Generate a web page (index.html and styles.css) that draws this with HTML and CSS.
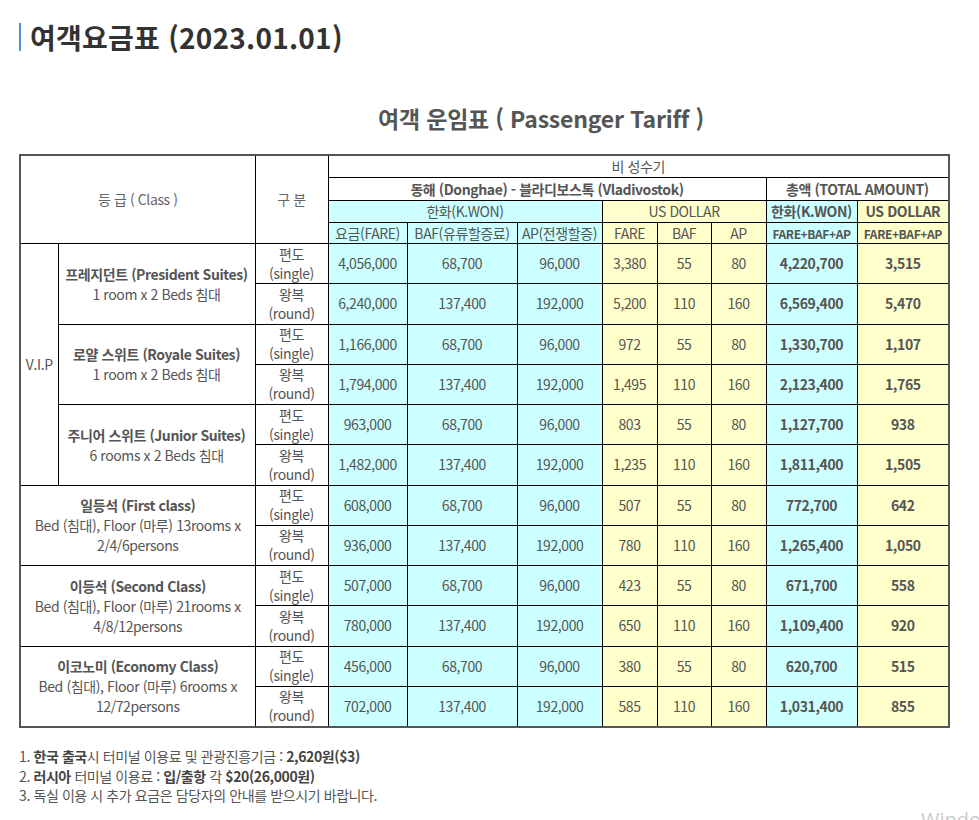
FILE: index.html
```html
<!DOCTYPE html>
<html lang="ko">
<head>
<meta charset="utf-8">
<title>여객요금표</title>
<link rel="stylesheet" href="styles.css">
</head>
<body>
<h2 class="page-title">여객요금표 (2023.01.01)</h2>
<section class="tariff">
  <h3 class="tariff-title">여객 운임표 ( Passenger Tariff )</h3>
  <table class="fare-table">
    <colgroup>
      <col style="width:38px"><col style="width:197px"><col style="width:73px">
      <col style="width:79px"><col style="width:110px"><col style="width:85px">
      <col style="width:55px"><col style="width:54px"><col style="width:55px">
      <col style="width:91px"><col style="width:92px">
    </colgroup>
    <thead>
      <tr class="h1">
        <th rowspan="4" colspan="2" class="light">등 급 ( Class )</th>
        <th rowspan="4" class="light">구 분</th>
        <th colspan="8">비 성수기</th>
      </tr>
      <tr class="h2">
        <th colspan="6" class="b">동해 (Donghae) - 블라디보스톡 (Vladivostok)</th>
        <th colspan="2" class="b">총액 (TOTAL AMOUNT)</th>
      </tr>
      <tr class="h3">
        <th colspan="3" class="krw">한화(K.WON)</th>
        <th colspan="3" class="usd">US DOLLAR</th>
        <th class="krw b">한화(K.WON)</th>
        <th class="usd b">US DOLLAR</th>
      </tr>
      <tr class="h4">
        <th class="krw">요금(FARE)</th>
        <th class="krw">BAF(유류할증료)</th>
        <th class="krw">AP(전쟁할증)</th>
        <th class="usd">FARE</th>
        <th class="usd">BAF</th>
        <th class="usd">AP</th>
        <th class="krw b sum">FARE+BAF+AP</th>
        <th class="usd b sum">FARE+BAF+AP</th>
      </tr>
    </thead>
    <tbody>
      <tr>
        <td rowspan="6">V.I.P</td>
        <td rowspan="2" class="cls"><b>프레지던트 (President Suites)</b><br>1 room x 2 Beds 침대</td>
        <td>편도<br>(single)</td>
        <td class="krw">4,056,000</td><td class="krw">68,700</td><td class="krw">96,000</td>
        <td class="usd">3,380</td><td class="usd">55</td><td class="usd">80</td>
        <td class="krw b">4,220,700</td><td class="usd b">3,515</td>
      </tr>
      <tr>
        <td>왕복<br>(round)</td>
        <td class="krw">6,240,000</td><td class="krw">137,400</td><td class="krw">192,000</td>
        <td class="usd">5,200</td><td class="usd">110</td><td class="usd">160</td>
        <td class="krw b">6,569,400</td><td class="usd b">5,470</td>
      </tr>
      <tr>
        <td rowspan="2" class="cls"><b>로얄 스위트 (Royale Suites)</b><br>1 room x 2 Beds 침대</td>
        <td>편도<br>(single)</td>
        <td class="krw">1,166,000</td><td class="krw">68,700</td><td class="krw">96,000</td>
        <td class="usd">972</td><td class="usd">55</td><td class="usd">80</td>
        <td class="krw b">1,330,700</td><td class="usd b">1,107</td>
      </tr>
      <tr>
        <td>왕복<br>(round)</td>
        <td class="krw">1,794,000</td><td class="krw">137,400</td><td class="krw">192,000</td>
        <td class="usd">1,495</td><td class="usd">110</td><td class="usd">160</td>
        <td class="krw b">2,123,400</td><td class="usd b">1,765</td>
      </tr>
      <tr>
        <td rowspan="2" class="cls"><b>주니어 스위트 (Junior Suites)</b><br>6 rooms x 2 Beds 침대</td>
        <td>편도<br>(single)</td>
        <td class="krw">963,000</td><td class="krw">68,700</td><td class="krw">96,000</td>
        <td class="usd">803</td><td class="usd">55</td><td class="usd">80</td>
        <td class="krw b">1,127,700</td><td class="usd b">938</td>
      </tr>
      <tr>
        <td>왕복<br>(round)</td>
        <td class="krw">1,482,000</td><td class="krw">137,400</td><td class="krw">192,000</td>
        <td class="usd">1,235</td><td class="usd">110</td><td class="usd">160</td>
        <td class="krw b">1,811,400</td><td class="usd b">1,505</td>
      </tr>
      <tr>
        <td rowspan="2" colspan="2" class="cls wide"><b>일등석 (First class)</b><br>Bed (침대), Floor (마루) 13rooms x 2/4/6persons</td>
        <td>편도<br>(single)</td>
        <td class="krw">608,000</td><td class="krw">68,700</td><td class="krw">96,000</td>
        <td class="usd">507</td><td class="usd">55</td><td class="usd">80</td>
        <td class="krw b">772,700</td><td class="usd b">642</td>
      </tr>
      <tr>
        <td>왕복<br>(round)</td>
        <td class="krw">936,000</td><td class="krw">137,400</td><td class="krw">192,000</td>
        <td class="usd">780</td><td class="usd">110</td><td class="usd">160</td>
        <td class="krw b">1,265,400</td><td class="usd b">1,050</td>
      </tr>
      <tr>
        <td rowspan="2" colspan="2" class="cls wide"><b>이등석 (Second Class)</b><br>Bed (침대), Floor (마루) 21rooms x 4/8/12persons</td>
        <td>편도<br>(single)</td>
        <td class="krw">507,000</td><td class="krw">68,700</td><td class="krw">96,000</td>
        <td class="usd">423</td><td class="usd">55</td><td class="usd">80</td>
        <td class="krw b">671,700</td><td class="usd b">558</td>
      </tr>
      <tr>
        <td>왕복<br>(round)</td>
        <td class="krw">780,000</td><td class="krw">137,400</td><td class="krw">192,000</td>
        <td class="usd">650</td><td class="usd">110</td><td class="usd">160</td>
        <td class="krw b">1,109,400</td><td class="usd b">920</td>
      </tr>
      <tr>
        <td rowspan="2" colspan="2" class="cls wide"><b>이코노미 (Economy Class)</b><br>Bed (침대), Floor (마루) 6rooms x 12/72persons</td>
        <td>편도<br>(single)</td>
        <td class="krw">456,000</td><td class="krw">68,700</td><td class="krw">96,000</td>
        <td class="usd">380</td><td class="usd">55</td><td class="usd">80</td>
        <td class="krw b">620,700</td><td class="usd b">515</td>
      </tr>
      <tr>
        <td>왕복<br>(round)</td>
        <td class="krw">702,000</td><td class="krw">137,400</td><td class="krw">192,000</td>
        <td class="usd">585</td><td class="usd">110</td><td class="usd">160</td>
        <td class="krw b">1,031,400</td><td class="usd b">855</td>
      </tr>
    </tbody>
  </table>
</section>
<ol class="notes">
  <li><b>한국 출국</b>시 터미널 이용료 및 관광진흥기금 : <b>2,620원($3)</b></li>
  <li><b>러시아</b> 터미널 이용료 : <b>입/출항</b> 각 <b>$20(26,000원)</b></li>
  <li>독실 이용 시 추가 요금은 담당자의 안내를 받으시기 바랍니다.</li>
</ol>
<div class="watermark">Windows 정품 인증</div>
</body>
</html>
```
FILE: styles.css
```css
html, body {
  margin: 0;
  padding: 0;
  background: #fff;
}
body {
  font-family: "Noto Sans CJK KR", "Noto Sans", sans-serif;
  color: #555;
  padding: 0 31px 0 19px;
  overflow: hidden;
  height: 820px;
  position: relative;
}
.page-title {
  margin: 23px 0 0 0;
  padding-left: 9px;
  border-left: 2px solid #4a8fd8;
  font-size: 28px;
  line-height: 28px;
  font-weight: 700;
  color: #333;
  letter-spacing: 0.25px;
}
.tariff {
  width: 929px;
}
.tariff-title {
  margin: 51px 0 20px 0;
  padding-left: 115px;
  text-align: center;
  font-size: 23px;
  line-height: 32px;
  font-weight: 700;
  color: #555;
  letter-spacing: -0.2px;
}
.fare-table {
  width: 929px;
  table-layout: fixed;
  border-collapse: collapse;
  border: 2px solid #555;
  font-size: 14px;
  color: #555;
  letter-spacing: -0.4px;
}
.fare-table th,
.fare-table td {
  border: 1px solid #000;
  padding: 0;
  text-align: center;
  vertical-align: middle;
  font-weight: 400;
  line-height: 19px;
  white-space: nowrap;
}
.fare-table th.light { color: #666; }
.fare-table .h1 th { height: 21px; }
.fare-table .h2 th { height: 22px; }
.fare-table .h3 th { height: 21px; }
.fare-table .h4 th { height: 20px; }
.fare-table tbody td { height: 39.25px; }
.fare-table .b { font-weight: 700; }
.fare-table .krw { background: #ccffff; }
.fare-table .usd { background: #ffffcc; }
.fare-table .sum { font-size: 12px; letter-spacing: -0.4px; }
.fare-table .cls { line-height: 20px; }
.fare-table .cls.wide { white-space: normal; padding: 0 4px; }
.notes {
  margin: 19px 0 0 0;
  padding: 0;
  list-style: none;
  counter-reset: n;
  font-size: 14px;
  line-height: 19.5px;
  color: #555;
  letter-spacing: -0.4px;
}
.notes li { counter-increment: n; }
.notes li::before { content: counter(n) ". "; }
.notes b { font-weight: 700; color: #444; }
.watermark {
  position: absolute;
  left: 921px;
  top: 806px;
  font-family: "Open Sans", sans-serif;
  font-size: 20px;
  color: #ccc;
  white-space: nowrap;
}
```
